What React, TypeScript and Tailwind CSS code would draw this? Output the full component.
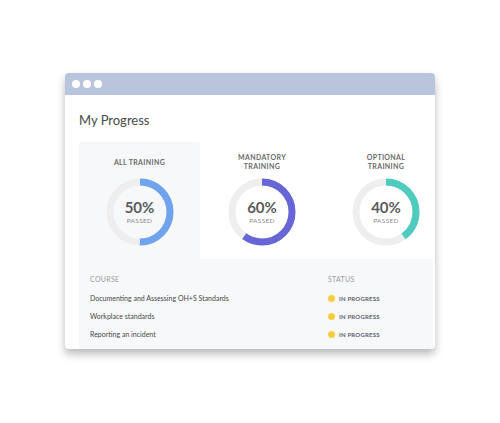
import React from 'react';

type Stat = { title: string[]; pct: number; color: string; active?: boolean };

const stats: Stat[] = [
  { title: ['ALL TRAINING'], pct: 50, color: '#6fa3ee', active: true },
  { title: ['MANDATORY', 'TRAINING'], pct: 60, color: '#6766d6' },
  { title: ['OPTIONAL', 'TRAINING'], pct: 40, color: '#4ecbbd' },
];

const courses = ['Documenting and Assessing OH+S Standards', 'Workplace standards', 'Reporting an incident'];

function Donut({ pct, color }: { pct: number; color: string }) {
  const r = 30;
  const c = 2 * Math.PI * r;
  return (
    <div className="relative w-[68px] h-[68px]">
      <svg width="68" height="68" viewBox="0 0 68 68">
        <circle cx="34" cy="34" r={r} fill="none" stroke="#eeeeef" strokeWidth="7" />
        <circle
          cx="34"
          cy="34"
          r={r}
          fill="none"
          stroke={color}
          strokeWidth="7"
          strokeDasharray={`${(c * pct) / 100} ${c}`}
          transform="rotate(-90 34 34)"
        />
      </svg>
      <div className="absolute inset-0 flex flex-col items-center justify-center">
        <span className="text-[15px] leading-[16px] font-bold text-[#5b5b5b]">{pct}%</span>
        <span className="text-[6.5px] leading-[8px] mt-[2px] text-[#8a8a8a] tracking-[0.3px]">PASSED</span>
      </div>
    </div>
  );
}

export default function App() {
  return (
    <div className="w-[500px] h-[423px] bg-white pt-[73px] pl-[65px]" style={{ fontFamily: 'Lato, "Open Sans", sans-serif' }}>
      <div className="w-[370px] h-[276px] rounded-[4px] overflow-hidden bg-white shadow-[0_5px_9px_rgba(0,0,0,0.28)]">
        {/* Title bar */}
        <div className="h-[22px] bg-[#b9c5dc] flex items-center gap-[3px] pl-[7px]">
          <span className="w-[8px] h-[8px] rounded-full bg-white" />
          <span className="w-[8px] h-[8px] rounded-full bg-white" />
          <span className="w-[8px] h-[8px] rounded-full bg-white" />
        </div>

        <div className="pl-[14px]">
          <h1 className="h-[47px] pt-[16px] text-[13px] leading-[18px] text-[#4a4a4a]">My Progress</h1>

          {/* Cards */}
          <div className="flex h-[117px]">
            {stats.map((s, i) => (
              <div
                key={i}
                className={`shrink-0 flex flex-col items-center pt-[9px] rounded-t-[3px] ${
                  s.active ? 'bg-[#f7f8fa]' : 'bg-white'
                } ${i === 0 ? 'w-[121px]' : 'w-[124px]'}`}
              >
                <div className="h-[22px] flex flex-col justify-center items-center">
                  {s.title.map((t) => (
                    <span key={t} className="text-[7px] leading-[9px] font-bold text-[#6a6a6a] tracking-[0.35px]">
                      {t}
                    </span>
                  ))}
                </div>
                <div className="mt-[5px]">
                  <Donut pct={s.pct} color={s.color} />
                </div>
              </div>
            ))}
          </div>

          {/* Table */}
          <div className="bg-[#f7f8fa] mr-[2px] h-[90px] pl-[11px] pt-[15px]">
            <div className="grid grid-cols-[238px_1fr] text-[7px] leading-[10px] text-[#9a9a9a] tracking-[0.3px]">
              <span>COURSE</span>
              <span>STATUS</span>
            </div>
            <div className="mt-[5px]">
              {courses.map((c) => (
                <div key={c} className="grid grid-cols-[238px_1fr] h-[18px] items-center">
                  <span className="text-[7px] text-[#474747]">{c}</span>
                  <span className="flex items-center gap-[4px]">
                    <span className="w-[7px] h-[7px] rounded-full bg-[#f7cd3e]" />
                    <span className="text-[6px] font-bold text-[#5d6273] tracking-[0.2px]">IN PROGRESS</span>
                  </span>
                </div>
              ))}
            </div>
          </div>
        </div>
      </div>
    </div>
  );
}
